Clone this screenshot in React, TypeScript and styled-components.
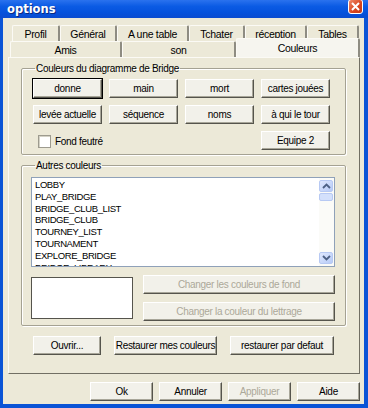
import React, { FC } from "react";
import styled, { createGlobalStyle } from "styled-components";

const UI_FONT = `"Liberation Sans", Arial, sans-serif`;

const GlobalStyle = createGlobalStyle`
  html, body {
    margin: 0;
    padding: 0;
    background: #0a54d6;
  }
  body {
    font-family: ${UI_FONT};
    font-size: 10px;
    letter-spacing: -0.3px;
  }
`;

const rowOne = [
  { label: "Profil", w: 48 },
  { label: "Général", w: 57 },
  { label: "A une table", w: 72 },
  { label: "Tchater", w: 56 },
  { label: "réception", w: 62 },
  { label: "Tables", w: 52 },
];
const rowTwo = [
  { label: "Amis", w: 112 },
  { label: "son", w: 114 },
  { label: "Couleurs", w: 124, active: true },
];
const diagramButtons = [
  "donne",
  "main",
  "mort",
  "cartes jouées",
  "levée actuelle",
  "séquence",
  "noms",
  "à qui le tour",
];
const otherColours = [
  "LOBBY",
  "PLAY_BRIDGE",
  "BRIDGE_CLUB_LIST",
  "BRIDGE_CLUB",
  "TOURNEY_LIST",
  "TOURNAMENT",
  "EXPLORE_BRIDGE",
  "BRIDGE_LIBRARY",
];

const Chevron: FC<{ up?: boolean }> = ({ up }) => (
  <svg width="9" height="6" viewBox="0 0 9 6">
    <path
      d={up ? "M1 5 L4.5 1.5 L8 5" : "M1 1 L4.5 4.5 L8 1"}
      fill="none"
      stroke="#4d6185"
      strokeWidth="1.8"
    />
  </svg>
);

const App: FC = () => {
  return (
    <Window>
      <GlobalStyle />
      <TitleBar>
        <Title>options</Title>
        <CloseButton>
          <svg width="9" height="9" viewBox="0 0 9 9">
            <path d="M1 1 L8 8 M8 1 L1 8" stroke="#fff" strokeWidth="2" />
          </svg>
        </CloseButton>
      </TitleBar>
      <Body>
        <TabRow $indent={4}>
          {rowOne.map((t) => (
            <Tab key={t.label} $w={t.w}>
              {t.label}
            </Tab>
          ))}
        </TabRow>
        <TabRow $indent={2}>
          {rowTwo.map((t) => (
            <Tab key={t.label} $w={t.w} $active={t.active}>
              {t.label}
            </Tab>
          ))}
        </TabRow>
        <Panel>
          <Group>
            <Legend>Couleurs du diagramme de Bridge</Legend>
            <ButtonGrid>
              {diagramButtons.map((b, i) => (
                <Button key={b} $default={i === 0}>
                  {b}
                </Button>
              ))}
              <CheckLabel>
                <CheckBox />
                Fond feutré
              </CheckLabel>
              <Button $col={4}>Equipe 2</Button>
            </ButtonGrid>
          </Group>
          <Group $gap={4}>
            <Legend>Autres couleurs</Legend>
            <ListBox>
              <Items>
                {otherColours.map((c) => (
                  <Item key={c}>{c}</Item>
                ))}
              </Items>
              <ScrollBar>
                <ScrollButton>
                  <Chevron up />
                </ScrollButton>
                <Thumb />
                <Track />
                <ScrollButton>
                  <Chevron />
                </ScrollButton>
              </ScrollBar>
            </ListBox>
            <PreviewRow>
              <Preview />
              <ChangeColumn>
                <Button disabled>Changer les couleurs de fond</Button>
                <Button disabled>Changer la couleur du lettrage</Button>
              </ChangeColumn>
            </PreviewRow>
          </Group>
          <PanelActions>
            <Button $w={68}>Ouvrir...</Button>
            <Button $w={103}>Restaurer mes couleurs</Button>
            <Button $w={104}>restaurer par defaut</Button>
          </PanelActions>
        </Panel>
        <DialogActions>
          <Button $w={63}>Ok</Button>
          <Button $w={63}>Annuler</Button>
          <Button $w={63} disabled>
            Appliquer
          </Button>
          <Button $w={63}>Aide</Button>
        </DialogActions>
      </Body>
    </Window>
  );
};

export default App;

const Window = styled.div`
  width: 368px;
  height: 408px;
  display: flex;
  flex-direction: column;
  background: #0a54d6;
  box-sizing: border-box;
  padding: 0 4px 4px 3px;
`;
const TitleBar = styled.div`
  height: 18px;
  margin: 0 -4px 0 -3px;
  display: flex;
  align-items: flex-start;
  justify-content: space-between;
  background: linear-gradient(to bottom, #2a72ee 0%, #0b5be4 35%, #0552dc 70%, #0a4cd0 100%);
`;
const Title = styled.span`
  font-family: "DejaVu Sans", sans-serif;
  font-weight: bold;
  font-size: 11.5px;
  letter-spacing: 0;
  color: #fff;
  margin: 2px 0 0 7px;
  text-shadow: 1px 1px 0 #0a2a80;
`;
const CloseButton = styled.div`
  width: 15px;
  height: 15px;
  margin: -1px 5px 0 0;
  box-sizing: border-box;
  border: 1px solid #fff;
  border-radius: 3px;
  background: linear-gradient(to bottom right, #f08a6a, #d8441e 60%, #c43a16);
  display: flex;
  align-items: center;
  justify-content: center;
`;
const Body = styled.div`
  flex: 1;
  background: #ece9d8;
  padding: 7px 4px 0 5px;
  display: flex;
  flex-direction: column;
`;
const TabRow = styled.div<{ $indent: number }>`
  display: flex;
  align-items: flex-end;
  height: 16px;
  padding-left: ${(p) => p.$indent}px;
`;
const Tab = styled.div<{ $w: number; $active?: boolean }>`
  width: ${(p) => p.$w}px;
  height: ${(p) => (p.$active ? 19 : 16)}px;
  box-sizing: border-box;
  display: flex;
  align-items: center;
  justify-content: center;
  padding-top: ${(p) => (p.$active ? 0 : 1)}px;
  font-size: 10.5px;
  background: ${(p) => (p.$active ? "#f6f5ef" : "#ece9d8")};
  border-top: 1px solid #fbfaf5;
  border-left: 1px solid #fbfaf5;
  border-right: 2px solid #8e8c82;
  border-radius: 2px 2px 0 0;
  color: #000;
  z-index: ${(p) => (p.$active ? 1 : 0)};
`;
const Panel = styled.div`
  height: 317px;
  box-sizing: border-box;
  border-top: 1px solid #fbfaf5;
  border-left: 1px solid #fbfaf5;
  border-right: 1px solid #716f64;
  border-bottom: 1px solid #716f64;
  padding: 0 13px 0 12px;
  display: flex;
  flex-direction: column;
`;
const Group = styled.fieldset<{ $gap?: number }>`
  margin: ${(p) => p.$gap ?? 4}px 0 0 0;
  padding: 4px 10px 4px 9px;
  border: 1px solid #a5a293;
  box-shadow: inset 1px 1px 0 #fff, 1px 1px 0 #fff;
  border-radius: 2px;
  min-width: 0;
`;
const Legend = styled.legend`
  padding: 0 1px;
  margin-left: 4px;
  line-height: 13px;
  color: #000;
`;
const ButtonGrid = styled.div`
  display: grid;
  grid-template-columns: repeat(4, 69px);
  grid-auto-rows: 19px;
  column-gap: 7px;
  row-gap: 7px;
  margin-left: 2px;
`;
const Button = styled.button<{ $default?: boolean; $w?: number; $col?: number }>`
  font-family: ${UI_FONT};
  font-size: 10px;
  letter-spacing: -0.3px;
  height: 19px;
  padding: 0;
  width: ${(p) => (p.$w ? `${p.$w}px` : "auto")};
  grid-column: ${(p) => p.$col ?? "auto"};
  white-space: nowrap;
  overflow: visible;
  color: #000;
  background: #f2f1ea;
  border-style: solid;
  border-width: 1px;
  border-color: #ffffff #55544c #55544c #ffffff;
  box-shadow: ${(p) =>
    p.$default ? "0 0 0 1px #000, inset -1px -1px 0 #a8a699" : "inset -1px -1px 0 #a8a699"};
  border-radius: 0;
  &:disabled {
    color: #aca899;
  }
`;
const CheckLabel = styled.label`
  grid-column: 1 / span 2;
  display: flex;
  align-items: center;
  gap: 4px;
  padding-left: 5px;
  margin-top: 2px;
  color: #000;
`;
const CheckBox = styled.span`
  width: 11px;
  height: 11px;
  background: #fff;
  border: 1px solid #9d9b8f;
  box-shadow: inset 1px 1px 0 #d4d2c6;
`;
const ListBox = styled.div`
  height: 90px;
  box-sizing: border-box;
  margin-top: 1px;
  border: 1px solid #8fa1b9;
  background: #fff;
  display: flex;
  overflow: hidden;
`;
const Items = styled.div`
  flex: 1;
  padding: 1px 0 0 3px;
`;
const Item = styled.div`
  font-size: 9.5px;
  letter-spacing: -0.4px;
  line-height: 11.8px;
  height: 11.8px;
  color: #000;
`;
const ScrollBar = styled.div`
  width: 14px;
  padding: 2px 1px 2px 0;
  display: flex;
  flex-direction: column;
  background: #fbfbf8;
`;
const ScrollButton = styled.div`
  height: 12px;
  border-radius: 2px;
  border: 1px solid #b7c9f3;
  box-sizing: border-box;
  background: linear-gradient(to bottom right, #dfe8fe, #b7cbf7);
  display: flex;
  align-items: center;
  justify-content: center;
`;
const Thumb = styled.div`
  height: 6px;
  margin-top: 1px;
  border-radius: 2px;
  border: 1px solid #b7c9f3;
  background: #d3e0fc;
`;
const Track = styled.div`
  flex: 1;
`;
const PreviewRow = styled.div`
  display: flex;
  gap: 10px;
  margin-top: 8px;
`;
const Preview = styled.div`
  width: 102px;
  height: 42px;
  margin-top: 2px;
  background: #fff;
  border: 1px solid #55544c;
  box-sizing: border-box;
`;
const ChangeColumn = styled.div`
  flex: 1;
  display: flex;
  flex-direction: column;
  gap: 8px;
`;
const PanelActions = styled.div`
  display: flex;
  gap: 13px;
  margin: 10px 0 0 12px;
`;
const DialogActions = styled.div`
  display: flex;
  justify-content: flex-end;
  gap: 6px;
  margin-top: 8px;
`;
